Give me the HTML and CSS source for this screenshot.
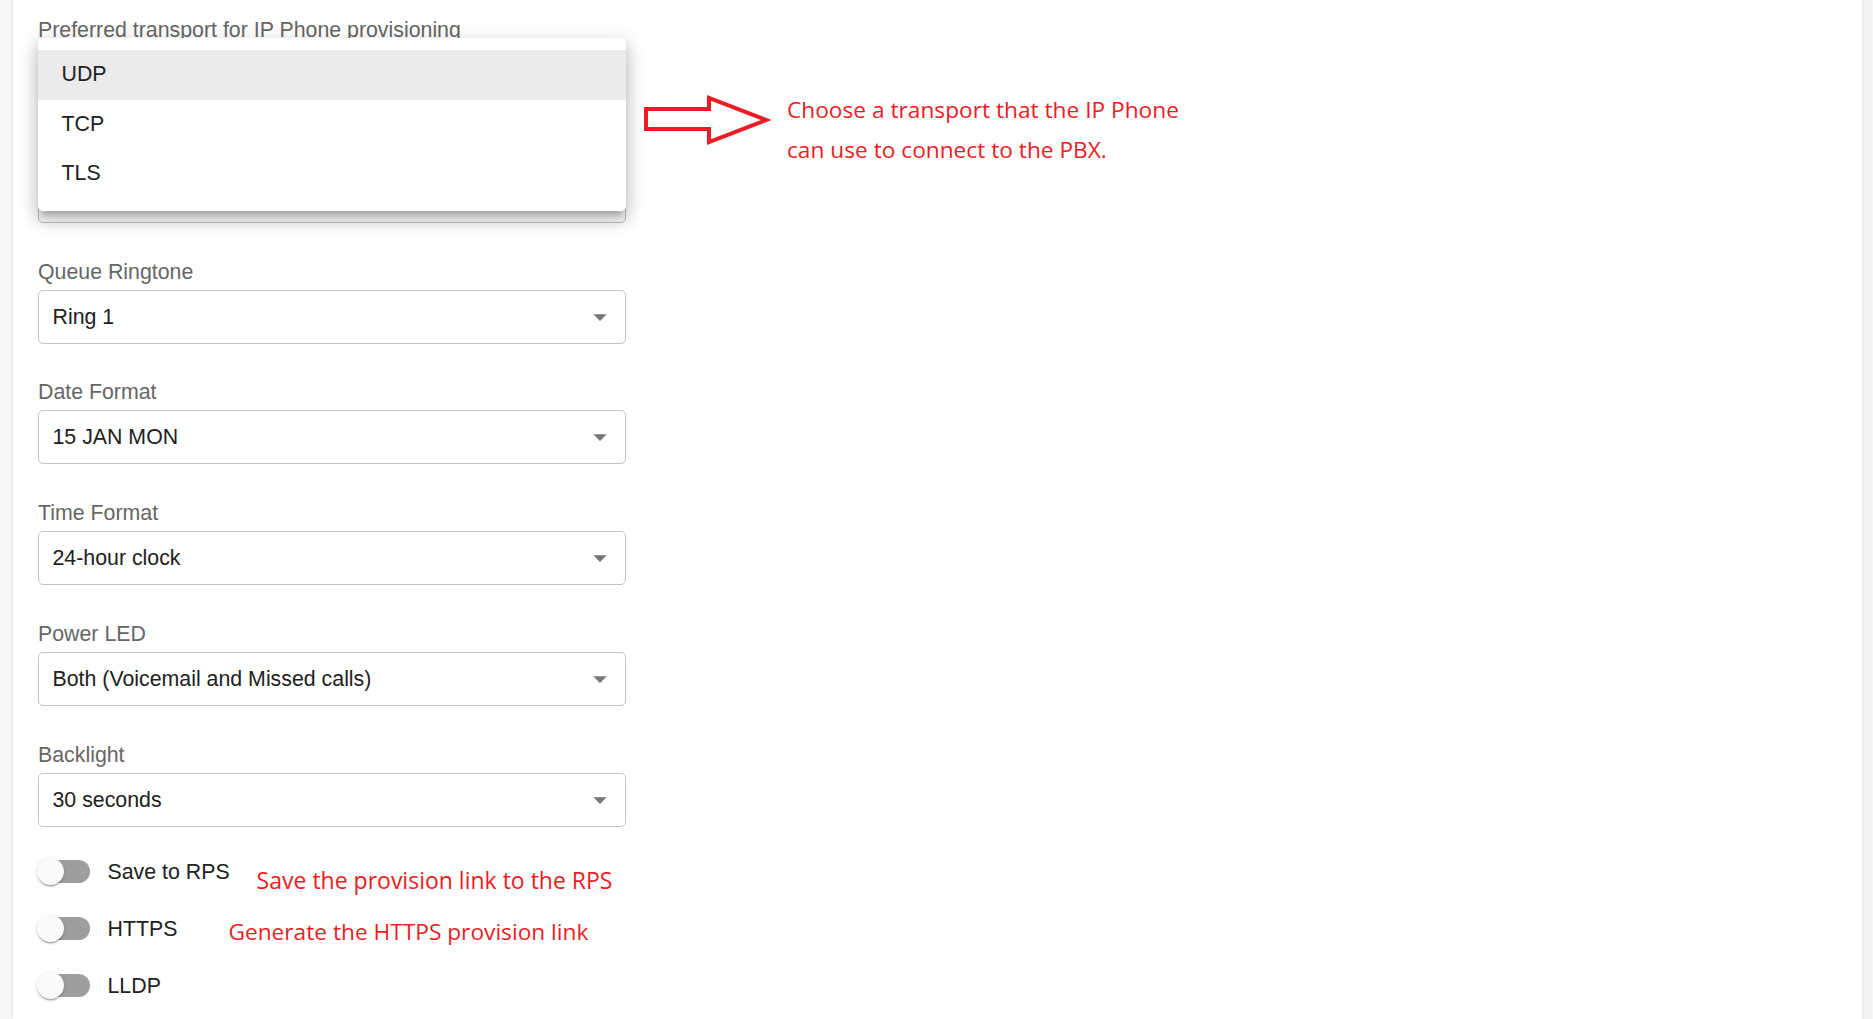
FILE: index.html
```html
<!DOCTYPE html>
<html lang="en">
<head>
<meta charset="utf-8">
<title>IP Phone provisioning</title>
<link rel="stylesheet" href="styles.css">
</head>
<body>
<div class="panel">
  <div class="content">
    <section class="form">
      <div class="fields">
        <div class="field">
          <div class="field-label">Preferred transport for IP Phone provisioning</div>
          <div class="select">
            <span class="select-value"></span>
            <svg class="select-icon" viewBox="0 0 24 24"><path d="M7 10l5 5 5-5z"/></svg>
          </div>
        </div>
        <div class="field">
          <div class="field-label"></div>
          <div class="select">
            <span class="select-value"></span>
            <svg class="select-icon" viewBox="0 0 24 24"><path d="M7 10l5 5 5-5z"/></svg>
          </div>
        </div>
        <div class="field">
          <div class="field-label">Queue Ringtone</div>
          <div class="select">
            <span class="select-value">Ring 1</span>
            <svg class="select-icon" viewBox="0 0 24 24"><path d="M7 10l5 5 5-5z"/></svg>
          </div>
        </div>
        <div class="field">
          <div class="field-label">Date Format</div>
          <div class="select">
            <span class="select-value">15 JAN MON</span>
            <svg class="select-icon" viewBox="0 0 24 24"><path d="M7 10l5 5 5-5z"/></svg>
          </div>
        </div>
        <div class="field">
          <div class="field-label">Time Format</div>
          <div class="select">
            <span class="select-value">24-hour clock</span>
            <svg class="select-icon" viewBox="0 0 24 24"><path d="M7 10l5 5 5-5z"/></svg>
          </div>
        </div>
        <div class="field">
          <div class="field-label">Power LED</div>
          <div class="select">
            <span class="select-value">Both (Voicemail and Missed calls)</span>
            <svg class="select-icon" viewBox="0 0 24 24"><path d="M7 10l5 5 5-5z"/></svg>
          </div>
        </div>
        <div class="field">
          <div class="field-label">Backlight</div>
          <div class="select">
            <span class="select-value">30 seconds</span>
            <svg class="select-icon" viewBox="0 0 24 24"><path d="M7 10l5 5 5-5z"/></svg>
          </div>
        </div>
      </div>

      <div class="switches">
        <div class="switch-row">
          <span class="switch"><span class="track"></span><span class="thumb"></span></span>
          <span class="switch-label">Save to RPS</span>
          <span class="hint hint-rps">Save the provision link to the RPS</span>
        </div>
        <div class="switch-row">
          <span class="switch"><span class="track"></span><span class="thumb"></span></span>
          <span class="switch-label">HTTPS</span>
          <span class="hint hint-https">Generate the HTTPS provision link</span>
        </div>
        <div class="switch-row">
          <span class="switch"><span class="track"></span><span class="thumb"></span></span>
          <span class="switch-label">LLDP</span>
        </div>
      </div>

      <ul class="menu">
        <li class="menu-item selected">UDP</li>
        <li class="menu-item">TCP</li>
        <li class="menu-item">TLS</li>
      </ul>
    </section>

    <aside class="note">
      <svg class="note-arrow" viewBox="0 0 132 50" width="132" height="50">
        <polygon points="4,14 67,14 67,3 124,25 67,47 67,34 4,34" />
      </svg>
      <p class="note-text">Choose a transport that the IP Phone<br>can use to connect to the PBX.</p>
    </aside>
  </div>
</div>
</body>
</html>
```

FILE: styles.css
```css
html, body {
  margin: 0;
  padding: 0;
}
body {
  background: #f4f5f7;
  height: 1019px;
  overflow: hidden;
  font-family: "Liberation Sans", Arial, sans-serif;
  font-size: 21.333px;
  color: #212121;
}
.panel {
  margin: 0 11px 0 13px;
  height: 1019px;
  background: #fff;
  box-shadow: 0 0 3px rgba(0, 0, 0, 0.14);
}
.content {
  display: flex;
  padding-left: 25px;
}
.form {
  position: relative;
  width: 588px;
  padding-top: 16.6px;
  flex: none;
}
.fields {
  display: flex;
  flex-direction: column;
  gap: 35.25px;
}
.field-label {
  height: 24px;
  line-height: 24px;
  margin-top: 1.5px;
  margin-bottom: 6px;
  color: #666;
  white-space: nowrap;
}
.select {
  box-sizing: border-box;
  height: 54px;
  border: 1px solid #c4c4c4;
  border-radius: 5px;
  display: flex;
  align-items: center;
  justify-content: space-between;
  padding: 0 9.3px 0 13.5px;
}
.select-value {
  line-height: 24px;
  white-space: nowrap;
}
.select-icon {
  width: 32px;
  height: 32px;
  fill: #757575;
  flex: none;
}
.switches {
  margin-top: 16.6px;
}
.switch-row {
  height: 57px;
  display: flex;
  align-items: center;
}
.switch {
  position: relative;
  width: 62px;
  height: 30px;
  margin-left: -3px;
  margin-right: 10.5px;
  flex: none;
}
.track {
  position: absolute;
  left: 9px;
  top: 3.5px;
  width: 46px;
  height: 23px;
  border-radius: 11.5px;
  background: #9e9e9e;
}
.thumb {
  position: absolute;
  left: 1.5px;
  top: 1.5px;
  width: 27px;
  height: 27px;
  border-radius: 50%;
  background: #fafafa;
  box-shadow: 0 2.7px 1.3px -1.3px rgba(0,0,0,0.2), 0 1.3px 1.3px 0 rgba(0,0,0,0.14), 0 1.3px 4px 0 rgba(0,0,0,0.12);
}
.switch-label {
  line-height: 24px;
  white-space: nowrap;
}
.hint {
  color: #ed1c24;
  font-family: "Open Sans", sans-serif;
  font-size: 22.7px;
  line-height: 30px;
  white-space: nowrap;
}
.hint-rps {
  font-size: 23px;
  margin-left: 27px;
  margin-top: 16px;
}
.hint-https {
  margin-left: 51px;
  margin-top: 6px;
}
.menu {
  position: absolute;
  top: 38px;
  left: 0;
  width: 588px;
  margin: 0;
  padding: 12px 0;
  list-style: none;
  background: #fff;
  border-radius: 5px;
  box-shadow: 0 6.7px 6.7px -4px rgba(0,0,0,0.2), 0 10.7px 13.3px 1.3px rgba(0,0,0,0.14), 0 4px 18.7px 2.7px rgba(0,0,0,0.12);
}
.menu-item {
  height: 49.5px;
  line-height: 49.5px;
  padding: 0 23.5px;
}
.menu-item.selected {
  background: #ebebeb;
}
.note {
  display: flex;
  align-items: flex-start;
  margin-left: 16px;
  margin-top: 95px;
}
.note-arrow {
  flex: none;
  fill: none;
  stroke: #ed1c24;
  stroke-width: 4;
  stroke-linejoin: miter;
  stroke-miterlimit: 10;
}
.note-text {
  margin: -5.3px 0 0 13px;
  color: #ed1c24;
  font-family: "Open Sans", sans-serif;
  font-size: 22.7px;
  line-height: 40px;
  white-space: nowrap;
}
```
